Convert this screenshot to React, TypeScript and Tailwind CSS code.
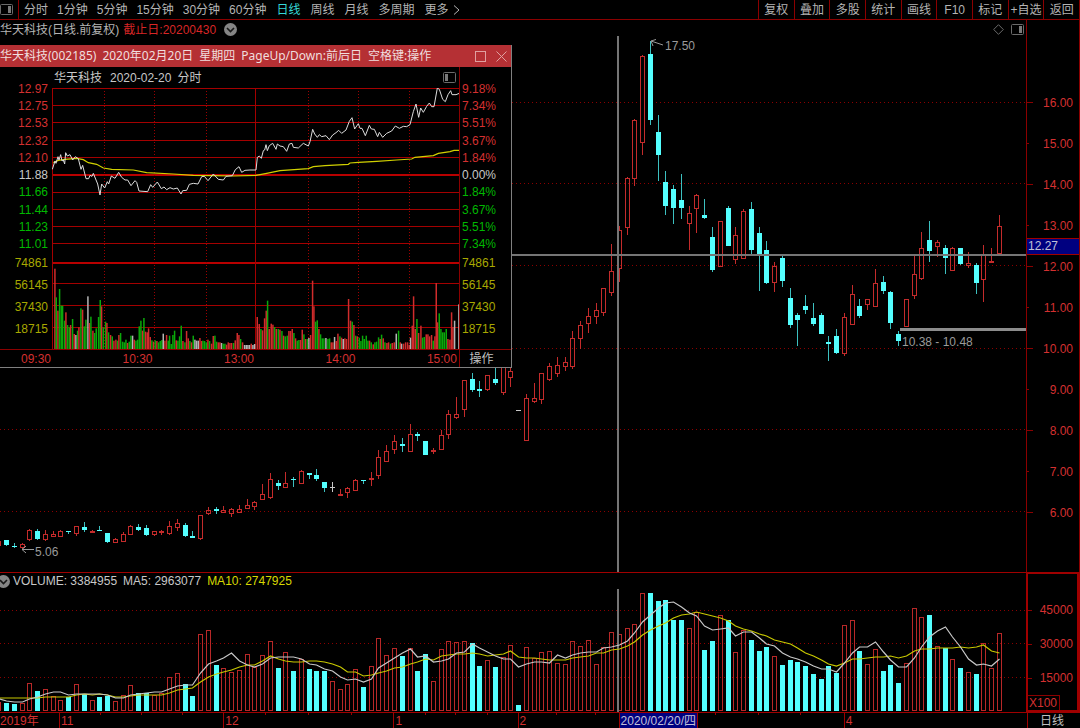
import React from "react";

const STEP = 7.756;
const FIRST = 6.7;
const BASE = 711;

// kind, high, body top, body bottom, low, top of the volume bar
type Candle = [string, number, number, number, number, number];

const candles: Candle[] = [
  ["c", 540, 540, 545, 546, 703], ["c", 543, 546, 547, 548, 704], ["r", 543, 544, 547, 549, 703], ["r", 529, 530, 539, 541, 683],
  ["c", 529, 531, 539, 540, 691], ["r", 530, 534, 539, 541, 689], ["r", 531, 534, 536, 537, 696], ["r", 530, 531, 536, 537, 700],
  ["c", 531, 531, 532, 534, 697], ["r", 526, 526, 533, 536, 684], ["c", 522, 527, 530, 532, 694], ["r", 530, 531, 532, 533, 700],
  ["c", 526, 530, 531, 531, 697], ["c", 533, 533, 542, 543, 696], ["r", 538, 539, 542, 543, 701], ["r", 532, 534, 541, 542, 695],
  ["r", 525, 526, 534, 535, 685], ["c", 524, 527, 530, 531, 693], ["c", 525, 528, 535, 536, 693], ["r", 531, 531, 534, 536, 695],
  ["r", 530, 531, 532, 535, 693], ["r", 521, 526, 533, 535, 677], ["r", 519, 523, 527, 531, 673], ["c", 523, 525, 536, 537, 684],
  ["c", 531, 536, 538, 538, 696], ["r", 515, 515, 538, 540, 634], ["r", 507, 510, 513, 515, 630], ["c", 507, 509, 511, 514, 665],
  ["r", 506, 510, 512, 513, 668], ["r", 508, 509, 513, 517, 672], ["r", 505, 509, 512, 512, 670], ["r", 499, 505, 508, 509, 654],
  ["r", 501, 502, 506, 510, 667], ["r", 484, 494, 499, 500, 655], ["r", 473, 479, 497, 499, 641], ["c", 480, 483, 486, 490, 668],
  ["r", 472, 483, 487, 488, 652], ["c", 477, 479, 480, 487, 671], ["r", 470, 471, 483, 483, 659], ["c", 473, 473, 475, 479, 669],
  ["c", 469, 475, 479, 481, 671], ["c", 482, 482, 488, 492, 671], ["w", 482, 487, 488, 492, 681], ["r", 489, 494, 495, 496, 689],
  ["r", 487, 488, 492, 498, 684], ["r", 479, 480, 490, 491, 669], ["c", 480, 480, 481, 484, 687], ["r", 472, 478, 479, 486, 666],
  ["r", 450, 457, 475, 479, 638], ["r", 445, 451, 461, 462, 655], ["r", 435, 441, 449, 454, 648], ["c", 438, 444, 446, 452, 656],
  ["r", 424, 434, 451, 451, 648], ["c", 432, 434, 436, 441, 671], ["c", 441, 441, 455, 455, 654], ["r", 448, 450, 451, 454, 681],
  ["r", 430, 435, 449, 449, 649], ["r", 410, 414, 434, 439, 641], ["r", 397, 414, 417, 419, 642], ["r", 380, 380, 409, 417, 641],
  ["c", 373, 379, 390, 392, 643], ["c", 381, 389, 391, 397, 666], ["r", 375, 375, 389, 391, 660], ["c", 362, 379, 383, 385, 667],
  ["r", 360, 362, 392, 395, 657], ["r", 362, 371, 377, 387, 645], ["w", 410, 410, 411, 411, 705], ["r", 394, 398, 440, 441, 647],
  ["r", 383, 398, 401, 403, 658], ["r", 373, 373, 399, 404, 652], ["r", 363, 366, 379, 381, 651], ["r", 357, 365, 373, 377, 663],
  ["r", 357, 362, 366, 371, 664], ["r", 331, 338, 366, 369, 641], ["r", 321, 325, 338, 349, 646], ["r", 308, 316, 323, 333, 640],
  ["r", 303, 310, 316, 324, 664], ["r", 288, 288, 312, 316, 647], ["r", 244, 271, 292, 296, 632], ["r", 226, 230, 268, 282, 634],
  ["r", 177, 178, 227, 235, 628], ["r", 119, 120, 178, 186, 624], ["r", 55, 56, 142, 155, 593], ["c", 41, 54, 120, 125, 593],
  ["c", 115, 132, 155, 181, 601], ["c", 171, 182, 206, 215, 600], ["c", 185, 189, 208, 224, 620], ["c", 174, 200, 208, 219, 620],
  ["r", 206, 213, 223, 250, 628], ["r", 194, 195, 208, 233, 612], ["c", 199, 215, 218, 219, 650], ["c", 227, 237, 270, 272, 641],
  ["r", 221, 221, 266, 267, 615], ["c", 206, 208, 246, 246, 620], ["r", 227, 235, 259, 264, 652], ["r", 209, 211, 258, 259, 630],
  ["c", 202, 209, 250, 254, 640], ["c", 227, 233, 255, 291, 651], ["c", 241, 250, 283, 284, 647], ["r", 262, 266, 282, 292, 656],
  ["c", 256, 258, 281, 287, 665], ["c", 288, 298, 325, 328, 660], ["c", 313, 315, 320, 346, 662], ["c", 295, 306, 310, 314, 666],
  ["c", 303, 318, 324, 326, 674], ["c", 313, 315, 334, 334, 679], ["c", 336, 342, 344, 361, 666], ["c", 329, 336, 353, 354, 673],
  ["r", 313, 317, 353, 356, 625], ["r", 285, 294, 324, 325, 620], ["c", 299, 306, 316, 318, 651], ["r", 299, 299, 304, 310, 664],
  ["r", 269, 283, 306, 307, 649], ["c", 276, 282, 291, 294, 671], ["c", 291, 292, 323, 329, 665], ["c", 331, 334, 341, 346, 683],
  ["r", 299, 299, 326, 327, 663], ["r", 255, 274, 295, 299, 608], ["r", 232, 248, 278, 280, 617], ["c", 221, 240, 251, 262, 615],
  ["r", 240, 242, 246, 257, 646], ["c", 245, 248, 258, 274, 648], ["r", 247, 248, 270, 271, 659], ["c", 248, 248, 264, 265, 668],
  ["r", 252, 263, 265, 268, 672], ["c", 263, 265, 283, 294, 674], ["r", 245, 255, 279, 302, 643], ["r", 248, 261, 262, 263, 668],
  ["r", 215, 226, 253, 254, 633],
];

const ma5 = [
  701, 702, 702, 699, 697, 694, 692, 692, 695, 694, 694, 694, 694, 695, 698, 698, 695, 694, 693, 692, 692, 689, 686, 685, 685, 673, 664,
  661, 658, 653, 661, 665, 667, 664, 658, 657, 657, 657, 659, 664, 665, 669, 671, 677, 680, 679, 682, 679, 668, 663, 658, 653, 649, 657,
  656, 662, 661, 659, 653, 652, 644, 648, 652, 656, 659, 659, 667, 664, 662, 662, 663, 655, 658, 655, 653, 652, 652, 648, 647, 645, 641,
  633, 622, 615, 608, 603, 602, 607, 613, 616, 626, 630, 629, 628, 636, 632, 632, 638, 644, 646, 653, 657, 659, 662, 666, 669, 669, 672,
  663, 653, 647, 647, 642, 652, 660, 667, 667, 658, 647, 637, 631, 627, 637, 647, 659, 665, 664, 666, 659,
];

const ma10 = [
  698, 698, 698, 698, 698, 697, 697, 697, 697, 695, 694, 695, 694, 695, 697, 697, 696, 695, 695, 695, 695, 693, 690, 689, 688, 682, 677,
  674, 672, 670, 667, 665, 665, 661, 656, 659, 661, 662, 662, 661, 661, 662, 664, 667, 672, 672, 676, 675, 673, 671, 668, 667, 664, 662,
  659, 660, 656, 655, 654, 654, 653, 654, 656, 655, 654, 651, 657, 658, 658, 659, 660, 660, 660, 658, 657, 656, 653, 653, 650, 649, 646,
  642, 635, 630, 626, 623, 618, 615, 614, 612, 614, 616, 618, 621, 626, 629, 631, 634, 636, 640, 642, 644, 648, 653, 656, 660, 664, 666,
  663, 659, 659, 658, 657, 657, 656, 658, 656, 651, 649, 649, 648, 648, 648, 647, 648, 647, 645, 651, 653,
];

// minute chart, in thirds of a pixel
const minutePrice =
  "157,328 165,303 168,310 174,290 177,300 182,284 186,303 190,300 194,312 197,278 202,288 210,284 218,300 226,290 235,296 243,328 248,316 258,356 266,356 270,346 276,349 280,340 293,372 300,405 305,372 314,384 322,365 326,372 334,348 345,355 356,337 365,352 375,360 383,360 393,377 405,362 410,367 417,393 443,395 452,374 458,382 472,366 484,386 492,381 500,389 510,383 520,387 532,384 543,402 548,392 560,391 568,373 580,370 594,372 605,350 613,349 624,362 640,342 655,358 670,360 678,349 697,347 706,329 717,320 725,337 735,331 750,330 768,330 772,292 778,288 784,295 790,272 794,270 798,254 802,272 808,257 818,250 828,268 832,252 840,258 850,260 860,274 868,252 876,250 880,262 895,264 910,250 925,258 930,245 938,208 944,222 952,232 958,224 965,230 978,227 988,239 998,225 1008,218 1016,211 1025,220 1038,210 1048,184 1056,173 1064,207 1075,191 1080,205 1086,205 1096,227 1108,196 1114,207 1123,208 1133,230 1138,217 1148,232 1160,220 1175,213 1186,198 1198,205 1210,199 1220,200 1230,194 1240,155 1248,132 1256,172 1262,144 1270,157 1280,139 1288,129 1295,140 1302,140 1312,84 1318,88 1328,118 1336,125 1344,104 1352,92 1356,104 1368,104 1378,100";
const minuteAverage =
  "160,308 175,301 195,298 230,295 250,299 265,308 290,313 310,324 335,328 400,330 440,338 520,342 580,346 640,347 700,348 768,346 800,340 840,332 925,326 940,320 975,317 1045,313 1050,309 1075,307 1130,304 1190,300 1235,297 1245,292 1300,287 1315,280 1350,275 1362,271 1378,271";
const minuteVolume =
  "164r241 168g155 173r115 178g180 183g130 187g130 193g85 197r110 202g72 207g65 211r72 217g90 222r45 227w42 232g55 236r65 242g122 247r118 252g68 257g88 263w158 268r78 272g97 278r55 283g48 288g62 295g96 300g147 304r128 309g65 316g82 320r78 325g50 331r42 336g38 341r25 347r28 352g25 356r42 361g48 367g22 372g20 377g28 382r18 387g22 392g40 397w40 402r28 407g25 412g28 417g68 422g85 427r55 431g93 436r52 441r50 445r62 450r36 455g26 460r22 465g26 470r24 475g20 480g24 485g27 489w46 494r25 499r42 504g25 508g40 513g15 518g42 523g55 528r26 533g25 538g38 543g70 548r24 554g20 559r54 564r32 569g24 574r20 579g40 584w28 589w25 594w25 599r33 604r24 608g25 613g24 618g20 623r28 628g24 634r16 639r39 644g40 649g22 654r20 659r20 664w18 669g16 674g16 679r13 684r20 689r18 694r18 700g18 705r26 711r48 716r42 721g30 727r20 733w12 738w12 743w12 748w12 753r16 758w12 763w15 771r96 777r75 782g60 787r56 793r92 798r115 802g145 807r60 813r76 818r73 823g66 828r60 834g60 839r58 845g54 850r40 855g38 861g40 866r54 871r54 876r60 881g48 886r32 891g25 896g27 901r27 906r58 911g44 916r30 921g30 926w33 931r42 937r205 941r128 946g82 951g86 956r60 961g44 966g32 971g32 977w33 983g30 988g32 993r20 998r20 1003w36 1008r24 1013r46 1019g38 1024r34 1029w30 1034r32 1039r30 1045r150 1051r85 1056g82 1061r72 1066g40 1071r38 1077g34 1082g24 1087g40 1092g30 1098g40 1103g25 1108r25 1113g20 1119r14 1124g20 1129g22 1135g35 1140r30 1144g43 1149r32 1154g20 1160r18 1165r20 1171g16 1176r18 1182r20 1188w46 1195g55 1200r20 1204w16 1210r16 1216r20 1222r20 1227r12 1231w34 1236r70 1240r158 1245r60 1250g90 1255r48 1262r70 1267g34 1272g36 1278r44 1283r44 1288r38 1294r42 1299g25 1304r38 1308r198 1312r80 1317g107 1322g60 1327g50 1332g50 1338g60 1343r30 1349r28 1354r110 1358r66 1363w85 1376w134";

const periods = ["1分钟", "5分钟", "15分钟", "30分钟", "60分钟"];
const tools = ["复权", "叠加", "多股", "统计", "画线", "F10", "标记", "+自选", "返回"];
const prices = ["16.00", "15.00", "14.00", "13.00", "12.00", "11.00", "10.00", "9.00", "8.00", "7.00", "6.00"];
const minuteLabels = ["12.97", "12.75", "12.53", "12.32", "12.10", "11.88", "11.66", "11.44", "11.23", "11.01"];
const percents = ["9.18%", "7.34%", "5.51%", "3.67%", "1.84%", "0.00%", "1.84%", "3.67%", "5.51%", "7.34%"];
const volumeLabels = ["74861", "56145", "37430", "18715"];

const barLeft = (i: number) => Math.round(FIRST + i * STEP - 2.5);
const linePoints = (ys: number[]) => ys.map((y, i) => `${barLeft(i) + 2.5},${y}`).join(" ");
const thirds = (s: string, dy: number) =>
  s
    .split(" ")
    .map((p) => {
      const [x, y] = p.split(",").map(Number);
      return `${x / 3},${y / 3 + dy}`;
    })
    .join(" ");

function PanelIcon({ left = false, className = "" }: { left?: boolean; className?: string }) {
  return (
    <svg className={className} width="13" height="11" viewBox="0 0 13 11">
      <rect x="0.5" y="0.5" width="12" height="10" rx="1" fill="none" stroke="#6b6b6b" />
      <rect x={left ? 2 : 8} y="2" width="3" height="7" fill="#7a7a7a" />
    </svg>
  );
}

function RoundChevron() {
  return (
    <svg width="13" height="13" viewBox="0 0 13 13">
      <circle cx="6.5" cy="6.5" r="6.5" fill="#858585" />
      <path d="M3 5l3.5 3.5L10 5" fill="none" stroke="#181818" strokeWidth="1.6" />
    </svg>
  );
}

function Toolbar() {
  return (
    <header className="flex h-5 items-center justify-between border-b border-[#8b0000]">
      <nav className="flex h-full items-center gap-[10px]">
        <button className="flex h-full w-[19px] items-center border-r border-[#8b0000]" aria-label="panel">
          <PanelIcon />
        </button>
        <div className="flex gap-[9px] -ml-[5px]">
          <button>分时</button>
          {periods.map((p) => (
            <button key={p}>{p}</button>
          ))}
        </div>
        <div className="flex gap-[10px]">
          <button className="text-[#35d8d8]">日线</button>
          <button>周线</button>
          <button>月线</button>
          <button>多周期</button>
          <button className="flex items-center gap-1">
            更多
            <svg width="7" height="10" viewBox="0 0 7 10">
              <path d="M1 0.5L6 5L1 9.5" fill="none" stroke="#b4b4b4" />
            </svg>
          </button>
        </div>
      </nav>
      <div className="grid h-full w-[322px] grid-cols-9 border-r border-[#8b0000]">
        {tools.map((t) => (
          <button key={t} className="border-l border-[#8b0000] whitespace-nowrap">
            {t}
          </button>
        ))}
      </div>
    </header>
  );
}

function CandleChart() {
  return (
    <svg className="block h-[536px] w-full" viewBox="0 36 1026 536">
      {[102.5, 183.5, 265.5, 348.5, 429.5, 511.5].map((y) => (
        <path key={y} d={`M0 ${y}H1026`} stroke="#8b0000" strokeDasharray="1 3" />
      ))}
      <g shapeRendering="crispEdges">
        <rect x="0" y="541" width="1" height="5" fill="#c42b2b" />
        {candles.map(([kind, high, top, bottom, low], i) => {
          const x = barLeft(i);
          if (kind === "r") {
            return (
              <g key={i} fill="#c42b2b">
                <rect x={x + 2} y={high} width="1" height={top - high} />
                <rect x={x + 2} y={bottom} width="1" height={low - bottom} />
                <rect x={x + 0.5} y={top + 0.5} width="4" height={Math.max(bottom - top, 1)} fill="none" stroke="#c42b2b" />
              </g>
            );
          }
          return (
            <g key={i}>
              <rect x={x + 2} y={high} width="1" height={low - high} fill={kind === "c" ? "#3cc0c0" : "#c8c8c8"} />
              <rect x={x} y={top} width="5" height={Math.max(bottom - top, 1)} fill={kind === "c" ? "#54ffff" : "#c8c8c8"} />
            </g>
          );
        })}
        <rect x="900" y="328" width="126" height="3" fill="#8c8c8c" />
        <rect x="0" y="254" width="1026" height="2" fill="#757575" />
        <rect x="617" y="36" width="2" height="536" fill="#757575" />
      </g>
      <g fill="none" stroke="#9a9a9a">
        <path d="M34 549.5H22M26 546L22 549.5L26 553" />
        <path d="M663 45L651 41M656 39.500L651 41L653 46" />
      </g>
      <g fill="#9a9a9a" fontSize="12">
        <text x="35" y="556">5.06</text>
        <text x="665" y="50">17.50</text>
        <text x="902" y="346">10.38 - 10.48</text>
      </g>
    </svg>
  );
}

function PriceAxis() {
  return (
    <aside className="relative border-x border-[#8b0000] pt-[62px]">
      {prices.map((p, i) => (
        <div key={p} className="flex h-[41px] items-center justify-between pr-[6px] text-[#d43030]">
          <span className={i % 2 ? "h-px w-[2px] bg-[#8b0000]" : "h-px w-[6px] bg-[#8b0000]"} />
          {p}
        </div>
      ))}
      <div className="absolute inset-x-0 top-[218px] h-[17px] border-y border-[#a00000] bg-[#000080] pl-px text-[#c0c0d8] leading-[15px]">
        12.27
      </div>
    </aside>
  );
}

function MinuteChart() {
  const bars = minuteVolume.split(" ").map((b) => b.match(/(\d+)(\D)(\d+)/)!.slice(1));
  const fills: Record<string, string> = { r: "#d02c2c", g: "#0aa80a", w: "#b4b4b4" };
  return (
    <svg className="block h-[261px] w-full" viewBox="52 88 407 261">
      <g shapeRendering="crispEdges" fill="#a40000">
        {[88, 105, 122, 140, 157, 192, 209, 226, 243, 283, 305, 327].map((y) => (
          <rect key={y} x="52" y={y} width="407" height="1" />
        ))}
        <rect x="52" y="174" width="407" height="2" fill="#b80000" />
        <rect x="52" y="262" width="407" height="2" fill="#b80000" />
        <rect x="52" y="88" width="1" height="261" />
        <rect x="255" y="88" width="1" height="261" />
      </g>
      {[104.5, 154.5, 206.5, 308.5, 358.5, 409.5].map((x) => (
        <path key={x} d={`M${x} 91V349`} stroke="#9c0000" strokeDasharray="1 2" />
      ))}
      {bars.map(([x, color, h]) => (
        <rect key={x} x={Number(x) / 3 - 0.5} y={349 - Number(h) / 3} width="1.5" height={Number(h) / 3} fill={fills[color]} />
      ))}
      <polyline points={thirds(minuteAverage, 60)} fill="none" stroke="#d0d000" strokeWidth="1.2" />
      <polyline points={thirds(minutePrice, 60)} fill="none" stroke="#dcdcdc" strokeWidth="1" />
    </svg>
  );
}

function MinuteScale({ labels, className }: { labels: string[]; className: string }) {
  const tone = (i: number) => (i < 5 ? "text-[#d43030]" : i === 5 ? "text-[#c8c8c8]" : "text-[#00b800]");
  return (
    <div className={className}>
      <div className="flex h-[171px] flex-col justify-between leading-4">
        {labels.map((l, i) => (
          <span key={i} className={tone(i)}>
            {l}
          </span>
        ))}
      </div>
      <div className="flex flex-col leading-[22px] text-[#a8a800]">
        {volumeLabels.map((l) => (
          <span key={l}>{l}</span>
        ))}
      </div>
    </div>
  );
}

function MinuteWindow() {
  return (
    <section className="absolute left-0 top-[25px] w-[512px] border-b border-r border-[#808080] bg-black">
      <div className="flex h-[22px] items-center justify-between bg-[#b53034] pr-1 text-[#f0dede]">
        <h2 className="flex gap-[6px] whitespace-nowrap font-['Noto_Sans','Noto_Sans_CJK_SC',sans-serif]">
          <span>华天科技(002185)</span>
          <span>2020年02月20日</span>
          <span>星期四</span>
          <span>PageUp/Down:前后日</span>
          <span>空格键:操作</span>
        </h2>
        <div className="flex items-center gap-[10px]">
          <button aria-label="maximize">
            <svg width="11" height="11" viewBox="0 0 11 11">
              <rect x="0.5" y="0.5" width="10" height="10" fill="none" stroke="#e0a0a0" />
            </svg>
          </button>
          <button aria-label="close">
            <svg width="11" height="11" viewBox="0 0 11 11">
              <path d="M0.500 0.500L10.500 10.500M10.500 0.500L0.500 10.500" stroke="#e0a0a0" />
            </svg>
          </button>
        </div>
      </div>
      <div className="grid grid-cols-[52px_1fr_52px]">
        <MinuteScale labels={minuteLabels} className="pr-1 pt-[14px] text-right" />
        <div>
          <div className="flex h-[21px] items-center justify-between pl-[2px] pr-[3px] text-[#c8c8c8]">
            <span className="flex gap-2">
              <span>华天科技</span>
              <span className="flex gap-[6px]">
                <span>2020-02-20</span>
                <span>分时</span>
              </span>
            </span>
            <PanelIcon left />
          </div>
          <MinuteChart />
        </div>
        <MinuteScale labels={percents} className="border-l border-[#8b0000] pl-[2px] pt-[14px]" />
      </div>
      <div className="grid h-[18px] grid-cols-[1fr_52px] border-t border-[#8b0000]">
        <div className="flex items-center justify-between pl-[21px] pr-[2px] text-[#d43030]">
          <span>09:30</span>
          <span>10:30</span>
          <span>13:00</span>
          <span>14:00</span>
          <span>15:00</span>
        </div>
        <button className="border-l border-[#8b0000] pr-2 text-[#c0c0c0]">操作</button>
      </div>
    </section>
  );
}

function VolumeChart() {
  return (
    <svg className="block h-[123px] w-full" viewBox="0 589 1026 123">
      {[610.5, 643.5, 677.5].map((y) => (
        <path key={y} d={`M0 ${y}H1026`} stroke="#8b0000" strokeDasharray="1 3" />
      ))}
      <g shapeRendering="crispEdges">
        <rect x="0" y="702" width="1" height="9" fill="#c42b2b" />
        {candles.map(([kind, , , , , top], i) =>
          kind === "c" || i === 66 ? (
            <rect key={i} x={barLeft(i)} y={top} width="5" height={BASE - top} fill="#54ffff" />
          ) : (
            <rect key={i} x={barLeft(i) + 0.5} y={top + 0.5} width="4" height={BASE - top - 1} fill="none" stroke="#b82828" />
          )
        )}
        <rect x="617" y="589" width="2" height="123" fill="#757575" />
      </g>
      <polyline points={`0,698 ${linePoints(ma10)}`} fill="none" stroke="#c8c800" strokeWidth="1.2" />
      <polyline points={`0,699 ${linePoints(ma5)}`} fill="none" stroke="#c8c8c8" strokeWidth="1.2" />
    </svg>
  );
}

function VolumeAxis() {
  return (
    <aside className="relative border-2 border-r-[3px] border-[#a00000] pt-[19px]">
      {["45000", "30000", "15000"].map((v) => (
        <div key={v} className="flex h-[34px] items-center justify-between pr-1 text-[#d43030]">
          <span className="h-px w-[4px] bg-[#8b0000]" />
          {v}
        </div>
      ))}
      <span className="absolute bottom-0 left-0 border-r border-t border-[#8b0000] pl-px pr-[2px] leading-[14px] text-[#d43030]">X100</span>
    </aside>
  );
}

function DateAxis() {
  const ticks = [100, 141, 182, 265, 308, 351, 425, 455, 487, 556, 595, 715, 758, 800];
  return (
    <footer className="relative grid h-4 grid-cols-[1fr_53px] border-t border-[#a00000] leading-4 text-[#d43030]">
      <svg className="absolute left-0 top-0" width="1026" height="2" viewBox="0 0 1026 2" shapeRendering="crispEdges">
        {ticks.map((x) => (
          <rect key={x} x={x} width="1" height="2" fill="#a00000" />
        ))}
      </svg>
      <div className="grid grid-cols-[59fr_164fr_170fr_124fr_101fr_225fr_183fr] *:whitespace-nowrap">
        <span>2019年</span>
        <span className="border-l border-[#a00000] pl-px">11</span>
        <span className="border-l border-[#a00000] pl-px">12</span>
        <span className="border-l border-[#a00000] pl-px">1</span>
        <span className="border-l border-[#a00000] pl-px">2</span>
        <span>
          <span className="inline-block border-x border-[#a00000] bg-[#000080] px-px text-[#c0c0d8]">2020/02/20/四</span>
        </span>
        <span className="border-l border-[#a00000] pl-px">4</span>
      </div>
      <span className="border-l border-[#a00000] pl-3 text-[#c0c0c0]">日线</span>
    </footer>
  );
}

export default function App() {
  return (
    <div className="w-full overflow-hidden bg-black font-['Liberation_Sans','Noto_Sans_CJK_SC',sans-serif] text-xs text-[#b4b4b4]">
      <Toolbar />
      <main className="grid grid-cols-[1fr_54px]">
        <section className="relative">
          <div className="flex h-4 items-center justify-between pr-[2px] pt-[3px]">
            <h1 className="flex items-center gap-1 whitespace-nowrap">
              <span>华天科技(日线.前复权)</span>
              <span className="text-[#d82626]">截止日:20200430</span>
              <button className="ml-1" aria-label="expand">
                <RoundChevron />
              </button>
            </h1>
            <div className="flex items-center gap-[7px]">
              <svg width="11" height="11" viewBox="0 0 11 11">
                <path d="M5.500 0.700L10.300 5.500L5.500 10.300L0.700 5.500Z" fill="none" stroke="#6b6b6b" />
              </svg>
              <PanelIcon />
            </div>
          </div>
          <CandleChart />
          <MinuteWindow />
        </section>
        <PriceAxis />
        <section className="border-t border-[#a00000]">
          <div className="flex h-4 items-center gap-[6px] whitespace-nowrap text-[#c8c8c8]">
            <button className="-ml-[3px] -mr-[3px]" aria-label="indicator">
              <RoundChevron />
            </button>
            <span>VOLUME: 3384955</span>
            <span>MA5: 2963077</span>
            <span className="text-[#d8d800]">MA10: 2747925</span>
          </div>
          <VolumeChart />
        </section>
        <VolumeAxis />
      </main>
      <DateAxis />
    </div>
  );
}
